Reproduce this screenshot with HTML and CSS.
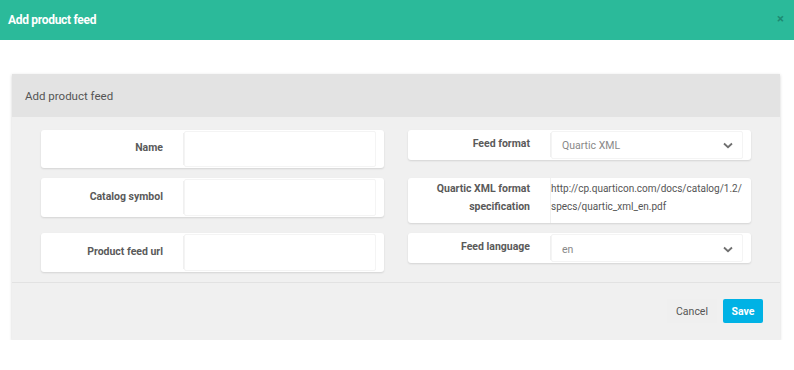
FILE: index.html
```
<!DOCTYPE html>
<html lang="en">
<head>
    <meta charset="UTF-8">
    <meta name="viewport" content="width=device-width, initial-scale=1.0">
    <title>Add product feed</title>
    <link rel="stylesheet" href="styles.css">
</head>
<body>
    <div class="modalHeader">
        <h1 class="modalTitle">Add product feed</h1>
        <span class="closeBtn">&times;</span>
    </div>
    <div class="modalBody">
        <div class="panel">
            <div class="panelHeader">Add product feed</div>
            <div class="panelBody">
                <div class="field first">
                    <label class="fieldLabel">Name</label>
                    <div class="fieldInput"><input type="text"></div>
                </div>
                <div class="field short">
                    <label class="fieldLabel">Feed format</label>
                    <div class="fieldInput">
                        <div class="select">Quartic XML
                            <svg class="chevron" width="10" height="7" viewBox="0 0 10 7"><path d="M1 1.5 L5 5.2 L9 1.5" fill="none" stroke="#6f6f6f" stroke-width="1.8"/></svg>
                        </div>
                    </div>
                </div>
                <div class="field">
                    <label class="fieldLabel">Catalog symbol</label>
                    <div class="fieldInput"><input type="text"></div>
                </div>
                <div class="field tall">
                    <label class="fieldLabel">Quartic XML format<br>specification</label>
                    <div class="fieldText">http://cp.quarticon.com/docs/catalog/1.2/<br>specs/quartic_xml_en.pdf</div>
                </div>
                <div class="field">
                    <label class="fieldLabel">Product feed url</label>
                    <div class="fieldInput"><input type="text"></div>
                </div>
                <div class="field short">
                    <label class="fieldLabel">Feed language</label>
                    <div class="fieldInput">
                        <div class="select lang">en
                            <svg class="chevron" width="10" height="7" viewBox="0 0 10 7"><path d="M1 1.5 L5 5.2 L9 1.5" fill="none" stroke="#6f6f6f" stroke-width="1.8"/></svg>
                        </div>
                    </div>
                </div>
            </div>
            <div class="panelFooter">
                <button class="btnCancel">Cancel</button>
                <button class="btnSave">Save</button>
            </div>
        </div>
    </div>
</body>
</html>
```

FILE: styles.css
```
body { margin: 0; background: #fff; font-family: Roboto, "Noto Sans", sans-serif; color: #555; }

.modalHeader { height: 40px; background: #2bba9a; display: flex; align-items: center; justify-content: space-between; padding: 0 10px 0 8px; box-sizing: border-box; }
.modalTitle { margin: 0; font-size: 12px; font-weight: 700; color: #fff; letter-spacing: -0.3px; }
.closeBtn { color: #1d8a72; font-size: 13px; font-weight: 700; line-height: 1; margin-top: -4px; }

.modalBody { padding: 34px 14px 0 12px; }
.panel { background: #f0f0f0; box-shadow: 0 1px 3px rgba(0,0,0,0.18); }
.panelHeader { height: 43px; background: #e3e3e3; padding: 0 13px; display: flex; align-items: center; font-size: 11.5px; color: #555; }

.panelBody { display: grid; grid-template-columns: 343px 343px; column-gap: 24px; row-gap: 10px; padding: 13px 29px 10px 29px; border-bottom: 1px solid #e2e2e2; align-items: start; }

.field { display: flex; background: #fff; border-radius: 3px; box-shadow: 0 1px 2px rgba(0,0,0,0.12); height: 39px; align-items: stretch; }
.field.first { height: 38px; }
.field.short { height: 30px; }
.field.tall { height: 45px; }

.fieldLabel { width: 122px; flex: none; padding-right: 20px; text-align: right; font-size: 10.5px; font-weight: 700; color: #5a5a5a; display: flex; align-items: center; justify-content: flex-end; line-height: 18px; margin: 3px 0; border-right: 1px solid #f0f0f0; padding-bottom: 2px; }
.field.tall .fieldLabel { margin: 0; padding-bottom: 5px; }

.fieldInput { flex: 1; min-width: 0; padding: 1px 8px 1px 0; display: flex; }
.fieldInput input { flex: 1; width: 0; min-width: 0; border: 1px solid #f4f4f4; border-radius: 2px; margin: 0; padding: 0 8px; font: inherit; background: #fff; outline: none; }

.select { flex: 1; border: 1px solid #f4f4f4; border-radius: 2px; display: flex; align-items: center; justify-content: space-between; padding: 0 9px 0 10px; font-size: 10.5px; color: #888; }
.select.lang { padding-top: 2px; }
.chevron { margin-top: 1px; }

.fieldText { flex: 1; font-size: 10px; color: #555; line-height: 18px; padding-top: 2px; }

.panelFooter { height: 57px; display: flex; justify-content: flex-end; align-items: flex-start; padding: 16px 17px 0 0; box-sizing: border-box; gap: 6px; }
.btnCancel { border: none; background: #efefef; color: #555; font: inherit; font-size: 10.5px; height: 24px; padding: 0 9px; }
.btnSave { border: none; background: #00b2e5; color: #fff; font: inherit; font-size: 10.5px; font-weight: 700; height: 24px; width: 40px; border-radius: 2px; padding: 0; }
```
